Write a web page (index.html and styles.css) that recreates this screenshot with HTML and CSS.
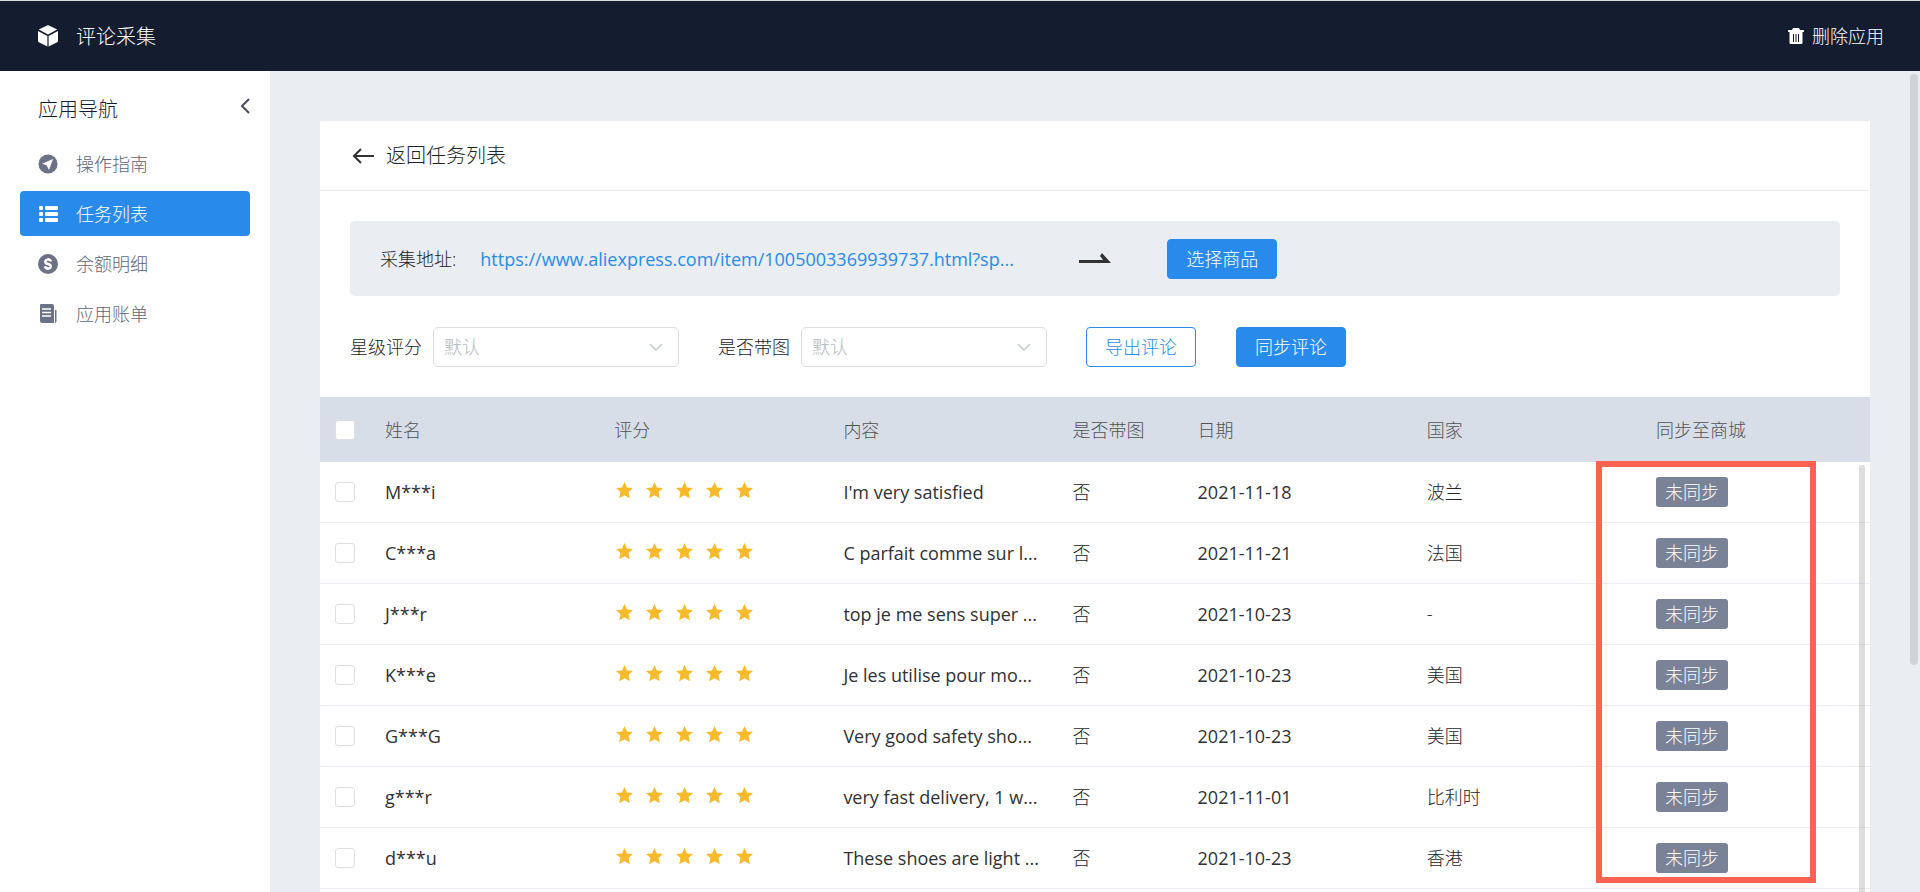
FILE: index.html
```
<!DOCTYPE html>
<html lang="zh-CN">
<head>
    <meta charset="UTF-8">
    <meta name="viewport" content="width=device-width, initial-scale=1.0">
    <title>评论采集</title>
    <link rel="stylesheet" href="styles.css">
</head>
<body>
    <svg class="sprite" aria-hidden="true">
        <symbol id="star" viewBox="0 0 16 16">
            <path d="M8 0l2.3 5.1 5.7.6-4.2 3.8 1.2 5.7L8 12.4 3 15.2l1.2-5.7L0 5.7l5.7-.6z"/>
        </symbol>
    </svg>

    <header class="topbar">
        <div class="brand">
            <svg class="icon" viewBox="0 0 20 22" fill="#fff">
                <path d="M10 0l9.2 4.6L10 9.6.8 4.6z"/>
                <path d="M0 6l9.4 5v10.6L.8 17.2Q0 16.8 0 16zM20 6l-9.4 5v10.6l8.6-4.4q.8-.4.8-1.2z"/>
            </svg>
            <span class="brand-name">评论采集</span>
        </div>
        <button class="delete-app" type="button">
            <svg width="16" height="16" viewBox="0 0 16 16" fill="#fff">
                <path fill-rule="evenodd" d="M5 0h6l1 2h4v2h-1.500v11q0 1-1 1h-11q-1 0-1-1V4H0V2h4zM5 6v8h1V6zm2.500 0v8h1V6zM10 6v8h1V6z"/>
            </svg>
            删除应用
        </button>
    </header>

    <div class="layout">
        <aside class="sidebar">
            <div class="sidebar-head">
                <span>应用导航</span>
                <button class="collapse" type="button" aria-label="收起">
                    <svg width="10" height="16" viewBox="0 0 10 16" fill="none" stroke="#4a4a5c" stroke-width="2">
                        <path d="M9 1L2 8l7 7"/>
                    </svg>
                </button>
            </div>
            <nav class="menu">
                <a class="menu-item" href="#">
                    <svg class="icon" viewBox="0 0 20 20">
                        <circle cx="10" cy="10" r="9.500" fill="#6b7285"/>
                        <path d="M15 5L4 9.800l4.600 1.400L11 16z" fill="#fff"/>
                    </svg>
                    操作指南
                </a>
                <a class="menu-item active" href="#">
                    <svg class="icon" viewBox="0 0 20 20" fill="#fff">
                        <rect x="1" y="2" width="4" height="4" rx="1"/>
                        <rect x="7" y="2" width="13" height="4" rx="1"/>
                        <rect x="1" y="8" width="4" height="4" rx="1"/>
                        <rect x="7" y="8" width="13" height="4" rx="1"/>
                        <rect x="1" y="14" width="4" height="4" rx="1"/>
                        <rect x="7" y="14" width="13" height="4" rx="1"/>
                    </svg>
                    任务列表
                </a>
                <a class="menu-item" href="#">
                    <svg class="icon" viewBox="0 0 20 20">
                        <circle cx="10" cy="10" r="10" fill="#6b7285"/>
                        <path d="M13 7.500Q12.500 5.600 10 5.600T7.300 7.700Q7.300 9.300 10 10t2.800 2.300q-.2 2.100-2.800 2.100t-3.100-2M10.500 4v2M9.500 14v2" fill="none" stroke="#fff" stroke-width="2.400"/>
                    </svg>
                    余额明细
                </a>
                <a class="menu-item" href="#">
                    <svg class="icon" viewBox="0 0 20 20">
                        <path d="M3 0h11q2 0 2 2v17H4q-2 0-2-2V1q0-1 1-1zM17 6h1.500v11q0 2-1.500 2z" fill="#6b7285"/>
                        <path d="M4 5h9M4 8.500h9M4 12h9" stroke="#fff" stroke-width="1.300"/>
                    </svg>
                    应用账单
                </a>
            </nav>
        </aside>

        <main class="content">
            <section class="card">
                <a class="back" href="#">
                    <svg width="22" height="16" viewBox="0 0 22 16" fill="none" stroke="#333" stroke-width="2">
                        <path d="M9 1L2 8l7 7M2 8h20"/>
                    </svg>
                    返回任务列表
                </a>

                <div class="source">
                    <span>采集地址:</span>
                    <a class="source-link" href="#">https://www.aliexpress.com/item/1005003369939737.html?sp...</a>
                    <svg class="source-arrow" width="32" height="12" viewBox="0 0 32 12" fill="#333">
                        <path d="M0 7h24l-3-4 2-3 9 10H0z"/>
                    </svg>
                    <button class="btn btn-primary" type="button">选择商品</button>
                </div>

                <div class="filters">
                    <label for="rating">星级评分</label>
                    <select id="rating">
                        <option>默认</option>
                    </select>
                    <label for="has-image">是否带图</label>
                    <select id="has-image">
                        <option>默认</option>
                    </select>
                    <button class="btn" type="button">导出评论</button>
                    <button class="btn btn-primary" type="button">同步评论</button>
                </div>

                <div class="table-wrap">
                    <table>
                        <thead>
                            <tr>
                                <th class="col-check"><input type="checkbox" aria-label="全选"></th>
                                <th>姓名</th>
                                <th>评分</th>
                                <th>内容</th>
                                <th class="col-image">是否带图</th>
                                <th>日期</th>
                                <th>国家</th>
                                <th class="col-sync">同步至商城</th>
                            </tr>
                        </thead>
                        <tbody id="reviews"></tbody>
                    </table>
                    <div class="table-scroll"></div>
                    <div class="highlight"></div>
                </div>
            </section>
            <div class="page-scroll"></div>
        </main>
    </div>

    <script>
        var reviews = [
            ["M***i", "I'm very satisfied", "否", "2021-11-18", "波兰"],
            ["C***a", "C parfait comme sur l...", "否", "2021-11-21", "法国"],
            ["J***r", "top je me sens super ...", "否", "2021-10-23", "-"],
            ["K***e", "Je les utilise pour mo...", "否", "2021-10-23", "美国"],
            ["G***G", "Very good safety sho...", "否", "2021-10-23", "美国"],
            ["g***r", "very fast delivery, 1 w...", "否", "2021-11-01", "比利时"],
            ["d***u", "These shoes are light ...", "否", "2021-10-23", "香港"]
        ];
        var star = '<svg width="17" height="17"><use href="#star"/></svg>';
        var html = "";

        for (var i = 0; i < reviews.length; i++) {
            var r = reviews[i];
            html += '<tr>' +
                '<td class="col-check"><input type="checkbox" aria-label="' + r[0] + '"></td>' +
                '<td class="latin">' + r[0] + '</td>' +
                '<td><div class="stars">' + star.repeat(5) + '</div></td>' +
                '<td class="latin">' + r[1] + '</td>' +
                '<td>' + r[2] + '</td>' +
                '<td class="latin">' + r[3] + '</td>' +
                '<td>' + r[4] + '</td>' +
                '<td><span class="tag">未同步</span></td>' +
                '</tr>';
        }
        document.getElementById("reviews").innerHTML = html;
    </script>
</body>
</html>
```
FILE: styles.css
```
* {
    box-sizing: border-box;
    margin: 0;
    padding: 0;
}

body {
    display: flex;
    flex-direction: column;
    height: 100vh;
    overflow: hidden;
    font-family: "Open Sans", "Noto Sans CJK SC", sans-serif;
    font-size: 18px;
    font-weight: 300;
    line-height: 24px;
    color: #222426;
    background-color: #eaedf2;
}

a {
    color: inherit;
    text-decoration: none;
}

button,
select {
    font: inherit;
    cursor: pointer;
}

svg {
    flex-shrink: 0;
}

.sprite {
    position: absolute;
    width: 0;
    height: 0;
}

.icon {
    width: 20px;
    height: 20px;
}

/* top bar */
.topbar {
    display: flex;
    align-items: center;
    justify-content: space-between;
    flex-shrink: 0;
    height: 71px;
    padding: 0 36px 0 38px;
    border-top: 1px solid #dcdfe0;
    background-color: #141c30;
    color: #fff;
}

.brand {
    display: flex;
    align-items: center;
    gap: 18px;
    font-size: 20px;
}

.brand .icon {
    height: 22px;
}

.brand-name {
    padding-top: 2px;
}

.delete-app {
    display: flex;
    align-items: center;
    gap: 8px;
    border: none;
    background: none;
    color: #fff;
}

.layout {
    display: flex;
    flex: 1;
    min-height: 0;
}

/* sidebar */
.sidebar {
    width: 270px;
    flex-shrink: 0;
    padding: 20px;
    background-color: #fff;
}

.sidebar-head {
    display: flex;
    justify-content: space-between;
    height: 50px;
    padding-left: 18px;
    font-size: 20px;
    line-height: 38px;
    color: #141c30;
}

.collapse {
    display: flex;
    padding-top: 7px;
    border: none;
    background: none;
}

.menu {
    display: flex;
    flex-direction: column;
    gap: 5px;
}

.menu-item {
    display: flex;
    align-items: center;
    gap: 18px;
    height: 45px;
    padding: 0 18px;
    border-radius: 4px;
    color: #5f6679;
}

.menu-item.active {
    background-color: #288beb;
    color: #fff;
}

/* main card */
.content {
    position: relative;
    display: flex;
    flex: 1;
    min-width: 0;
    padding: 50px 50px 0;
}

.card {
    flex: 1;
    min-width: 0;
    background-color: #fff;
}

.back {
    display: flex;
    align-items: center;
    gap: 12px;
    height: 70px;
    padding: 0 32px;
    border-bottom: 1px solid #ebebeb;
    font-size: 20px;
}

.source {
    display: flex;
    align-items: center;
    height: 75px;
    margin: 30px 30px 0;
    padding: 0 30px;
    border-radius: 5px;
    background-color: #eaedf2;
}

.source-link {
    width: 531px;
    margin-left: 24px;
    font-weight: 400;
    white-space: nowrap;
    color: #288beb;
}

.source-arrow {
    margin: 0 56px 0 68px;
}

.btn {
    width: 110px;
    height: 40px;
    border: 1px solid #288beb;
    border-radius: 4px;
    background-color: #fff;
    color: #288beb;
}

.btn-primary {
    background-color: #288beb;
    color: #fff;
}

.filters {
    display: flex;
    align-items: center;
    padding: 31px 30px 30px;
}

.filters select {
    width: 246px;
    height: 40px;
    margin: 0 39px 0 11px;
    padding: 0 10px;
    appearance: none;
    border: 1px solid #dcdfe6;
    border-radius: 5px;
    color: #b4b8c0;
    background: #fff url("data:image/svg+xml,%3Csvg xmlns='http://www.w3.org/2000/svg' width='14' height='8' fill='none' stroke='%23c0c4cc' stroke-width='1.400'%3E%3Cpath d='M1 1l6 6 6-6'/%3E%3C/svg%3E") no-repeat right 15px center;
}

.filters .btn + .btn {
    margin-left: 40px;
}

/* reviews table */
.table-wrap {
    position: relative;
}

table {
    width: 100%;
    table-layout: fixed;
    border-collapse: separate;
    border-spacing: 0;
}

th,
td {
    padding: 0 0 0 13px;
    text-align: left;
    white-space: nowrap;
}

th {
    height: 65px;
    font-weight: 300;
    color: #505256;
    background-color: #d8dee8;
}

td {
    height: 61px;
    border-bottom: 1px solid #ebeef5;
}

.latin {
    font-weight: 400;
    color: #303133;
}

.col-check {
    width: 52px;
    padding-left: 15px;
}

.col-image {
    width: 125px;
}

.col-sync {
    width: 227px;
}

input[type="checkbox"] {
    display: block;
    width: 20px;
    height: 20px;
    appearance: none;
    border: 1px solid #dcdfe6;
    border-radius: 3px;
    background-color: #fff;
}

.stars {
    display: flex;
    gap: 13px;
    padding: 0 0 3px 2px;
    fill: #f7ba2a;
}

.tag {
    display: inline-block;
    padding: 0 9px;
    border-radius: 3px;
    line-height: 30px;
    color: #fff;
    background-color: #798297;
}

.table-scroll {
    position: absolute;
    top: 68px;
    right: 5px;
    bottom: -10px;
    width: 6px;
    border-radius: 3px;
    background-color: rgba(144, 144, 144, 0.3);
}

.highlight {
    position: absolute;
    top: 64px;
    right: 54px;
    bottom: 6px;
    width: 220px;
    border: 6px solid #ff6251;
}

.page-scroll {
    position: absolute;
    top: 3px;
    right: 2px;
    width: 8px;
    height: 72%;
    border-radius: 4px;
    background-color: #d0d3d8;
}
```
